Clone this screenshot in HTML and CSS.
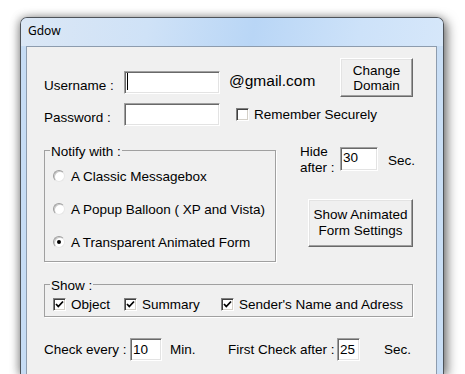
FILE: index.html
```html
<!DOCTYPE html>
<html lang="en">
<head>
    <meta charset="UTF-8">
    <meta name="viewport" content="width=device-width, initial-scale=1.0">
    <title>Gdow</title>
    <link rel="stylesheet" href="styles.css">
</head>
<body>
    <div class="window">
        <div class="titlebar">Gdow</div>
        <div class="client">
            <div class="account">
                <span class="label label-user">Username :</span>
                <div class="field field-user"><span class="caret"></span></div>
                <span class="domain">@gmail.com</span>
                <button class="btn btn-domain">Change<br>Domain</button>
                <span class="label label-pass">Password :</span>
                <div class="field field-pass"></div>
                <div class="check check-remember"><span class="box"></span>Remember Securely</div>
            </div>

            <div class="notify">
                <div class="group group-notify">
                    <div class="group-title">Notify with :</div>
                    <div class="radio"><span class="dot"></span>A Classic Messagebox</div>
                    <div class="radio"><span class="dot"></span>A Popup Balloon ( XP and Vista)</div>
                    <div class="radio"><span class="dot on"></span>A Transparent Animated Form</div>
                </div>
                <div class="side">
                    <div class="hide-row">
                        <span class="hide-label">Hide<br>after :</span>
                        <div class="field field-hide">30</div>
                        <span class="unit">Sec.</span>
                    </div>
                    <button class="btn btn-anim">Show Animated<br>Form Settings</button>
                </div>
            </div>

            <div class="group group-show">
                <div class="group-title">Show :</div>
                <div class="show-row">
                    <div class="check check-object"><span class="box"><svg width="9" height="9" viewBox="0 0 9 9"><path d="M1 4 L3.3 6.5 L8 1.5" fill="none" stroke="#000" stroke-width="1.8"/></svg></span>Object</div>
                    <div class="check check-summary"><span class="box"><svg width="9" height="9" viewBox="0 0 9 9"><path d="M1 4 L3.3 6.5 L8 1.5" fill="none" stroke="#000" stroke-width="1.8"/></svg></span>Summary</div>
                    <div class="check"><span class="box"><svg width="9" height="9" viewBox="0 0 9 9"><path d="M1 4 L3.3 6.5 L8 1.5" fill="none" stroke="#000" stroke-width="1.8"/></svg></span>Sender's Name and Adress</div>
                </div>
            </div>

            <div class="timing">
                <span class="label label-every">Check every :</span>
                <div class="field field-min">10</div>
                <span class="unit unit-min">Min.</span>
                <span class="label label-first">First Check after :</span>
                <div class="field field-first">25</div>
                <span class="unit unit-sec">Sec.</span>
            </div>
        </div>
    </div>
</body>
</html>
```

FILE: styles.css
```css
html, body {
    height: 100%;
    overflow: hidden;
}
body {
    margin: 0;
    padding: 17px 0 0 20px;
    box-sizing: border-box;
    background-color: #ffffff;
    font-family: "Liberation Sans", Arial, sans-serif;
    font-size: 13.5px;
    color: #000000;
}
.window {
    width: 424px;
    height: 357px;
    box-sizing: border-box;
    display: flex;
    flex-direction: column;
    padding: 0 6px 0 5px;
    border: 1px solid #4e5359;
    border-bottom: none;
    border-radius: 7px 7px 0 0;
    background: linear-gradient(90deg, #c6dcf4, #c2d9f3 50%, #c9def5);
    box-shadow: 3px 3px 12px rgba(0,0,0,0.55), -2px 0 8px rgba(0,0,0,0.25);
}
.titlebar {
    flex: none;
    height: 28px;
    box-sizing: border-box;
    margin: 0 -6px 0 -5px;
    padding: 5px 0 0 7px;
    line-height: 16px;
    font-family: "Noto Sans", "Open Sans", sans-serif;
    font-size: 12px;
    background: linear-gradient(100deg, #dbe7f5 0%, #cfe2f7 30%, #b9d6f6 55%, #cde2f9 80%, #d6e7fa 100%);
    border-radius: 6px 6px 0 0;
}
.client {
    flex: 1;
    box-sizing: border-box;
    padding: 11px 0 0 17px;
    background-color: #f0f0f0;
    border: 1px solid #8d9cae;
    border-bottom: none;
}

/* shared controls */
.label, .unit, .domain {
    line-height: 23px;
    white-space: nowrap;
}
.field {
    box-sizing: border-box;
    height: 23px;
    padding: 0 2px;
    line-height: 21px;
    background-color: #ffffff;
    border: 1px solid;
    border-color: #a0a0a0 #ffffff #ffffff #a0a0a0;
    box-shadow: inset 1px 1px 0 #696969, inset -1px -1px 0 #e3e3e3;
}
.btn {
    box-sizing: border-box;
    margin: 0;
    padding: 0;
    font: inherit;
    line-height: 15px;
    color: #000000;
    background-color: #f0f0f0;
    border: 1px solid;
    border-color: #ffffff #696969 #696969 #ffffff;
    box-shadow: inset -1px -1px 0 #a0a0a0, inset 1px 1px 0 #e3e3e3;
    text-align: center;
}
.check {
    display: flex;
    align-items: center;
    height: 15px;
    white-space: nowrap;
}
.box {
    width: 13px;
    height: 13px;
    box-sizing: border-box;
    margin-right: 5px;
    display: flex;
    align-items: center;
    justify-content: center;
    background-color: #ffffff;
    border: 1px solid;
    border-color: #808080 #ffffff #ffffff #808080;
    box-shadow: inset 1px 1px 0 #404040, inset -1px -1px 0 #d4d0c8;
}
.group {
    box-sizing: border-box;
    border: 1px solid #a0a0a0;
    box-shadow: 1px 1px 0 #ffffff;
}
.group-title {
    width: fit-content;
    margin: -6px 0 0 5px;
    padding: 0 1px;
    line-height: 14px;
    background-color: #f0f0f0;
}

/* account rows */
.account {
    display: grid;
    grid-template-columns: 80px 96px 120px 73px;
    grid-template-rows: 39px 23px;
    row-gap: 6px;
    align-items: start;
}
.label-user {
    margin-top: 16px;
}
.field-user {
    margin-top: 13px;
    padding: 1px 2px;
}
.field-pass {
    grid-column: 2;
}
.caret {
    display: block;
    width: 1px;
    height: 17px;
    background-color: #000000;
}
.domain {
    margin: 11px 0 0 9px;
    font-size: 15.5px;
}
.btn-domain {
    height: 39px;
}
.label-pass {
    margin-top: 3px;
}
.check-remember {
    grid-column: 3 / 5;
    margin: 4px 0 0 16px;
}

/* notify section */
.notify {
    display: flex;
    margin-top: 24px;
}
.group-notify {
    width: 232px;
    padding: 0 0 9px 0;
}
.radio {
    display: flex;
    align-items: center;
    height: 20px;
    margin: 13px 0 0 8px;
    white-space: nowrap;
}
.group-title + .radio {
    margin-top: 7px;
}
.dot {
    width: 12px;
    height: 12px;
    box-sizing: border-box;
    margin-right: 6px;
    border-radius: 50%;
    background-color: #ffffff;
    border: 1px solid;
    border-color: #9c9c9c #e6e6e6 #e6e6e6 #9c9c9c;
    box-shadow: inset 1px 1px 0 #c9c9c9;
    display: flex;
    align-items: center;
    justify-content: center;
}
.dot.on::after {
    content: "";
    width: 4px;
    height: 4px;
    border-radius: 50%;
    background-color: #000000;
}
.side {
    margin: -6px 0 0 24px;
}
.hide-row {
    display: flex;
    align-items: flex-start;
}
.hide-label {
    width: 40px;
    line-height: 16px;
}
.field-hide {
    width: 38px;
    height: 24px;
    margin-top: 3px;
    line-height: 20px;
}
.hide-row .unit {
    margin: 9px 0 0 10px;
    line-height: 16px;
}
.btn-anim {
    display: block;
    width: 105px;
    height: 48px;
    margin: 23px 0 0 8px;
    line-height: 16px;
}

/* show section */
.group-show {
    width: 369px;
    margin-top: 22px;
    padding-bottom: 4px;
}
.show-row {
    display: flex;
    margin: 4px 0 0 8px;
}
.check-object {
    width: 71px;
}
.check-summary {
    width: 97px;
}

/* timing row */
.timing {
    display: flex;
    margin-top: 21px;
}
.label-every {
    width: 86px;
}
.field-min {
    width: 32px;
}
.unit-min {
    width: 58px;
    margin-left: 8px;
}
.label-first {
    width: 109px;
}
.field-first {
    width: 23px;
}
.unit-sec {
    margin-left: 24px;
}
```
